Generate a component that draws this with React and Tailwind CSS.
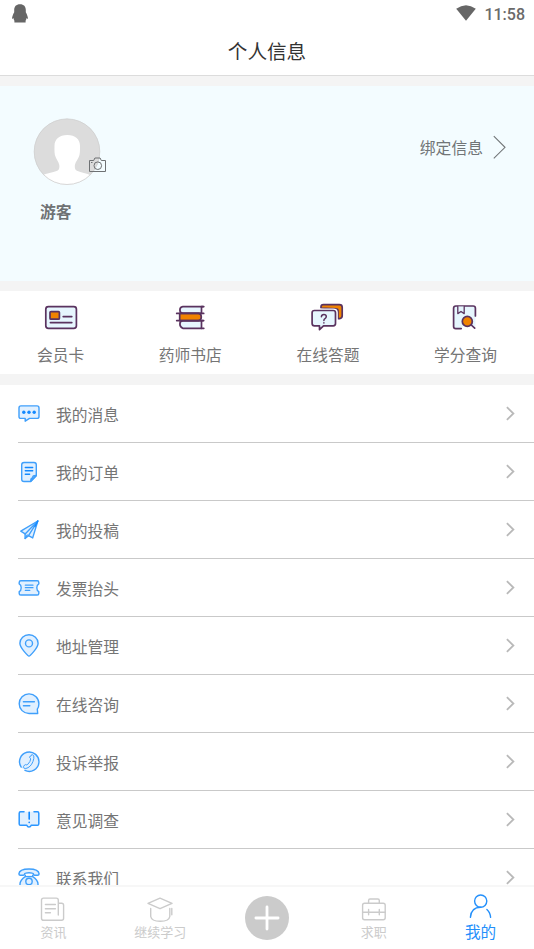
import clsx from 'clsx';

/* ---------- shortcut icons ---------- */
const ShortcutSvg = ({ children }) => (
  <svg width="35" height="30" viewBox="0 0 35 30" fill="#e6f6fe" stroke="#5a335f" strokeWidth="1.7" strokeLinecap="round" strokeLinejoin="round">
    {children}
  </svg>
);

const CardIcon = () => (
  <ShortcutSvg>
    <rect x="2.8" y="4.7" width="30.6" height="21.6" rx="2.6" />
    <rect x="7" y="9.6" width="9.4" height="7.6" rx="1" fill="#f08300" />
    <path d="M20.2 14.6h8.6M7.4 20.6h21.4" />
  </ShortcutSvg>
);

const BooksIcon = () => (
  <ShortcutSvg>
    <path d="M30 4.6H9.800Q6.900 4.900 6.900 8t2.900 3.400H28.500V4.600" />
    <path d="M30 18.600H9.800Q6.900 19 6.900 22t2.900 4.300H28.500v-7.700" />
    <path d="M6.700 11.400h18.800q2.800.4 2.800 3.600t-2.800 3.600H6.700z" fill="#f08300" />
    <path d="M3.700 11.400h27M3.700 18.600h27M28.500 4.600h2.300M28.500 26.300h2.300" />
  </ShortcutSvg>
);

const QuizIcon = () => (
  <ShortcutSvg>
    <path d="M11 6V4.800Q11 2.600 13.400 2.600h16q2.800 0 2.800 2.600v8.600q0 2.600-2.600 2.800H28V8.800q0-2-2-2z" fill="#f08300" />
    <path d="M4.400 8.200h19q2.600 0 2.600 2.400v11.200q0 2.400-2.600 2.400H14l-4 3.800v-3.800H4.400Q2 24.200 2 21.800V10.600Q2 8.200 4.400 8.200z" stroke="#fff" strokeWidth="3.6" />
    <path d="M4.400 8.500h18.800q2.300 0 2.300 2.300v10.800q0 2.300-2.300 2.300H13.500l-4 3.800v-3.800H4.400q-2.300 0-2.300-2.300V10.800q0-2.300 2.300-2.300z" />
    <path d="M11.400 14.700q.2-2.200 2.500-2.200t2.400 2.100q0 1.300-1.300 2-1.100.6-1.100 1.800M13.900 20.800v.1" fill="none" strokeWidth="1.500" />
  </ShortcutSvg>
);

const CreditIcon = () => (
  <ShortcutSvg>
    <path d="M7.500 3.900h17.700q2.200 0 2.200 2.200v18.100H15l-1 1.900H7.500q-2 0-2-2V5.900q0-2 2-2z" stroke="none" />
    <path d="M13.200 26.600H7.800q-2.200 0-2.200-2.200V6.300Q5.600 4 7.800 4h17.300q2.300 0 2.300 2.300v7.700" fill="none" />
    <path d="M9.800 4.400v7.200l3.200-2.100 3.200 2.100V4.400" strokeWidth="1.300" />
    <path d="m22.700 22.500 4 3.700" />
    <circle cx="19.300" cy="19.400" r="5" fill="#f08300" />
  </ShortcutSvg>
);

/* ---------- menu icons ---------- */
const MenuSvg = ({ children }) => (
  <svg width="24" height="25" viewBox="0 0 24 25" fill="#e1f0ff" stroke="#3f9ffb" strokeWidth="1.4" strokeLinecap="round" strokeLinejoin="round">
    {children}
  </svg>
);

const MessageIcon = () => (
  <MenuSvg>
    <path d="M4 4.900h16q2 0 2 2v8.500q0 2-2 2h-7.500l-4.300 2.800v-2.800H4q-2 0-2-2V6.900q0-2 2-2z" />
    <g fill="#1389ff" stroke="none">
      <circle cx="6.800" cy="11.200" r="1.700" />
      <circle cx="12" cy="11.200" r="1.700" />
      <circle cx="17.200" cy="11.200" r="1.700" />
    </g>
  </MenuSvg>
);

const OrderIcon = () => (
  <MenuSvg>
    <path d="M7 3.500h10q2.300 0 2.300 2.300v11l-5.600 5.700H7q-2.300 0-2.300-2.300V5.800q0-2.300 2.300-2.300z" />
    <path d="M13.800 22.300q-.2-3 1.200-3.200.8-.1.800-1.200.1-1.500 3.400-1.400z" />
    <path d="M8.300 8.500h7.400M8.300 11.800h7.400M8.300 15.300h4.300" stroke="#1389ff" />
  </MenuSvg>
);

const SubmitIcon = () => (
  <MenuSvg>
    <path d="m20.800 4-17 10.200 4.300 2.700v4.600l3.400-2.800 4.200 2.200z" />
    <path d="M20.800 4 8.100 16.900M20.800 4l-9.300 14.700M8.100 21.500l2.100-3.500" />
    <path d="M20.800 4 18 9.500" stroke="#1389ff" />
  </MenuSvg>
);

const InvoiceIcon = () => (
  <MenuSvg>
    <path d="M3.800 5.800h16.400q1.600 0 1.600 1.600v1.500q-2 1-2 3.900t2 3.900v1.700q0 1.600-1.600 1.600H3.800q-1.600 0-1.600-1.600v-1.700q2-1 2-3.900t-2-3.900V7.400q0-1.600 1.600-1.600z" />
    <path d="M8.300 10.200h7.700M8.300 12.700h7.700M8.300 15.400h4.500" strokeWidth="1.200" />
  </MenuSvg>
);

const AddressIcon = () => (
  <MenuSvg>
    <path d="M12 23.100q-1 0-4.900-4.700-4.200-5-4.200-8.100a9.100 8.500 0 0 1 18.200 0q0 3.100-4.200 8.100-3.900 4.700-4.900 4.700z" />
    <circle cx="12" cy="10.400" r="3.500" />
  </MenuSvg>
);

const ConsultIcon = () => (
  <MenuSvg>
    <path d="M12 2.900a9.800 9.800 0 0 1 9.900 9.800q0 3.300-1.600 5.500l.4 4.300H12a9.800 9.800 0 0 1 0-19.600z" />
    <path d="M6.400 10.700h11M6.400 14.700h6.400" />
  </MenuSvg>
);

const ComplainIcon = () => (
  <MenuSvg>
    <circle cx="12" cy="12.500" r="9.600" stroke="none" />
    <path d="M4.200 18.100A9.700 9.700 0 1 1 8 21.400" fill="none" />
    <path d="M14.300 6.400q.2-1.100 1.100-.8 2.100.9 1.400 4-1.400 6.600-5.800 9.100-2.400 1.400-4.100.4-1-.7-.4-1.500l1.200-1.700q.5-.6 1.100-.2 1 .6 2-.4 2.700-2.800 2.900-5.300-.1-.8-.8-1.100-.6-.3-.3-1z" strokeWidth="1" />
  </MenuSvg>
);

const SurveyIcon = () => (
  <MenuSvg>
    <path d="M2.200 4.800h19.700v13.500H13.600l-1.600 1.400-1.600-1.400H2.200z" stroke="none" />
    <path d="M7 4.800H3.600q-1.400 0-1.400 1.400v10.700q0 1.400 1.400 1.400h6.200q.6 1.700 2.200 1.700t2.200-1.700h6.200q1.400 0 1.400-1.400V6.200q0-1.400-1.400-1.400H17" fill="none" stroke="#2b96ff" strokeWidth="1.500" />
    <path d="M12.200 5.300v6.800M12.200 15.300v.2" stroke="#1389ff" strokeWidth="1.600" />
  </MenuSvg>
);

const ContactIcon = () => (
  <MenuSvg>
    <path d="M1.900 8.900Q2.300 4 12 4t10.100 4.900q-.1 1.400-1.400 1.400h-2.900q-1.200 0-1.300-1.200-.1-1-1.200-1-3.300-.6-6.600 0-1.100 0-1.200 1-.1 1.200-1.300 1.200H3.300q-1.300 0-1.400-1.400z" />
    <path d="M8.300 10.300v1.300Q3.200 14.700 3 19v1q0 1.500 1.500 1.500h15Q21 21.500 21 20v-1q-.2-4.300-5.300-7.400v-1.300M8.300 11.600h7.400" />
    <circle cx="12" cy="16.400" r="3.200" />
  </MenuSvg>
);

/* ---------- tab icons ---------- */
const TabSvg = ({ children }) => (
  <svg width="28" height="28" viewBox="0 0 28 28" fill="none" stroke="currentColor" strokeWidth="1.400" strokeLinecap="round" strokeLinejoin="round" className="shrink-0">
    {children}
  </svg>
);

const NewsIcon = () => (
  <TabSvg>
    <path d="M20 24.300H4.600Q2.500 24.300 2.500 22.200V4.200q0-2.100 2.100-2.100h12.600q2.100 0 2.100 2.100v14.900M19.600 7.300h3q2 0 2 2v13q0 2-2 2H20" />
    <path d="M6.400 8.500h10M6.400 12.700h10M6.400 16.800h5" />
  </TabSvg>
);

const StudyIcon = () => (
  <TabSvg>
    <path d="M14 2.100 26 7.400l-12 5.300L2 7.400z" />
    <path d="M4.700 12.500v8q.8 4.800 9.600 4.800T23.800 20.500v-8M25.800 12.500v6.300" />
  </TabSvg>
);

const JobIcon = () => (
  <TabSvg>
    <rect x="2.600" y="7.200" width="22.600" height="16.600" rx="2" />
    <path d="M8.600 6.900V4.400q0-1.400 1.400-1.400h7.900q1.400 0 1.400 1.400v2.500M2.600 16.300h22.600M8.600 13.500v5.200M19.300 13.500v5.200" />
  </TabSvg>
);

const MineIcon = () => (
  <TabSvg>
    <circle cx="13.700" cy="8.100" r="6.100" />
    <path d="M3.400 24.400q.6-10.200 10.300-10.200M19.900 16.500q3.300 2.800 3.700 7.900" />
  </TabSvg>
);

const shortcuts = [
  { label: '会员卡', icon: CardIcon },
  { label: '药师书店', icon: BooksIcon },
  { label: '在线答题', icon: QuizIcon },
  { label: '学分查询', icon: CreditIcon },
];

const menu = [
  { label: '我的消息', icon: MessageIcon },
  { label: '我的订单', icon: OrderIcon },
  { label: '我的投稿', icon: SubmitIcon },
  { label: '发票抬头', icon: InvoiceIcon },
  { label: '地址管理', icon: AddressIcon },
  { label: '在线咨询', icon: ConsultIcon },
  { label: '投诉举报', icon: ComplainIcon },
  { label: '意见调查', icon: SurveyIcon },
  { label: '联系我们', icon: ContactIcon },
];

function StatusBar() {
  return (
    <div className="flex h-7 shrink-0 items-center justify-between pr-[9px] pl-3">
      <svg width="16" height="20" viewBox="0 0 16 20" fill="#666">
        <path d="M8 .2c3.900 0 5.800 2.400 5.800 5.700v2.300c1.200 2 2 4.300 2.200 6.200-.5.700-1.100.4-1.500-.3-.1 1.100-.4 1.900-.9 2.600v1.900H2.400v-1.900c-.5-.7-.8-1.500-.9-2.600-.4.700-1 1-1.500.3.200-1.900 1-4.200 2.200-6.200V5.900C2.200 2.600 4.100.2 8 .2z" />
      </svg>
      <div className="flex items-center gap-[8px]">
        <svg width="20" height="16" viewBox="0 0 20 16" fill="#666" className="-mt-[3px]">
          <path d="M.2 3.800Q10-3.200 19.800 3.800L10 15.700z" />
        </svg>
        <span className="mt-[1px] font-[Roboto] text-[16px] leading-5 font-medium text-[#6a6a6a]">11:58</span>
      </div>
    </div>
  );
}

function Profile() {
  return (
    <section className="mt-[10px] flex h-[195px] shrink-0 justify-between bg-[#f3fcff] pr-7 pl-[33px]">
      <div className="pt-8">
        <div className="relative h-[68px] w-[68px]">
          <svg width="68" height="68" viewBox="0 0 68 68">
            <clipPath id="avatar"><circle cx="34" cy="33.700" r="33" /></clipPath>
            <circle cx="34" cy="33.700" r="33" fill="#dcdcdc" />
            <path clipPath="url(#avatar)" fill="#fff" d="M34.300 17c8 0 12.700 4.200 12.700 11 0 3 .1 6-.5 9-1 4-4 6.500-4.600 10-.3 3 .2 4.800 2 5.700 4.500 2 9.600 2.300 14.100 4.800V70H9V57.500c4.500-2.500 10.400-2.800 15.300-4.800 1.800-.9 2.300-2.700 2-5.700-.6-3.500-3.400-6-4.400-10-.6-3-.4-6-.4-9 0-6.800 4.800-11 12.800-11z" />
            <circle cx="34" cy="33.700" r="32.800" fill="none" stroke="#cfcfcf" strokeWidth=".8" />
          </svg>
          <svg width="19" height="16" viewBox="0 0 19 16" fill="none" stroke="#6e7173" strokeWidth="1" className="absolute top-[39px] left-[55px]">
            <path d="M1.500 3.500h4.200l1.200-2.500h5.200l1.200 2.500h4.200v11h-16z" />
            <circle cx="9.800" cy="8.700" r="3.800" />
            <path d="M3 5.500h1.500" />
          </svg>
        </div>
        <p className="mt-[14px] ml-[7px] text-[15.8px] leading-6 font-bold text-[#6f7274]">游客</p>
      </div>
      <button className="mt-[50px] flex h-6 items-center gap-[10px] text-[15.8px] text-[#717577]">
        绑定信息
        <svg width="13" height="24" viewBox="0 0 13 24" fill="none" stroke="#717577" strokeWidth="1.100" className="-mt-[2px]">
          <path d="M.8 1.200 12 12.300.8 23.300" />
        </svg>
      </button>
    </section>
  );
}

function TabItem({ label, icon: Icon, active }) {
  return (
    <button className={clsx('flex flex-1 flex-col items-center', active ? 'pt-[6px] text-[#2490fb]' : 'pt-[9px] text-[#cbcbcb]')}>
      <Icon />
      <span className={active ? '-mt-[2px] text-[15.6px] leading-6' : '-mt-[2px] text-[13px] leading-5'}>{label}</span>
    </button>
  );
}

export default function App() {
  return (
    <div className="flex h-[949px] w-[534px] flex-col overflow-hidden bg-[#f4f4f4] font-['Noto_Sans_CJK_SC',sans-serif]">
      <header className="h-[76px] shrink-0 border-b border-[#dcdcdc] bg-white">
        <StatusBar />
        <h1 className="text-center text-[19.6px] leading-[46px] text-[#333]">个人信息</h1>
      </header>

      <Profile />

      <nav className="mt-[10px] flex h-[83px] shrink-0 justify-between bg-white px-[37px] pt-[11px]">
        {shortcuts.map(({ label, icon: Icon }) => (
          <a key={label} className="flex flex-col items-center">
            <Icon />
            <span className="mt-[11px] text-[15.75px] leading-6 text-[#757575]">{label}</span>
          </a>
        ))}
      </nav>

      <ul className="mt-[11px] min-h-0 flex-1 overflow-hidden bg-white pl-[18px]">
        {menu.map(({ label, icon: Icon }) => (
          <li key={label} className="flex h-[58px] items-center border-b border-[#c9c9c9] pr-[19px]">
            <span className="-ml-[1px]"><Icon /></span>
            <span className="mt-[2px] ml-[15px] flex-1 text-[15.75px] leading-6 text-[#757575]">{label}</span>
            <svg width="9" height="15" viewBox="0 0 9 15" fill="none" stroke="#b9b9b9" strokeWidth="1.800">
              <path d="M.9 1.100 7.400 7.500.9 13.900" />
            </svg>
          </li>
        ))}
      </ul>

      <footer className="flex h-16 shrink-0 border-t-2 border-[#f7f7f7] bg-white">
        <TabItem label="资讯" icon={NewsIcon} />
        <TabItem label="继续学习" icon={StudyIcon} />
        <button className="flex flex-1 justify-center pt-[9px]">
          <svg width="44" height="44" viewBox="0 0 44 44">
            <circle cx="22" cy="22" r="22" fill="#cbcbcb" />
            <path d="M22 10.900v22.200M10.900 22h22.200" stroke="#fff" strokeWidth="2.800" strokeLinecap="round" />
          </svg>
        </button>
        <TabItem label="求职" icon={JobIcon} />
        <TabItem label="我的" icon={MineIcon} active />
      </footer>
    </div>
  );
}
